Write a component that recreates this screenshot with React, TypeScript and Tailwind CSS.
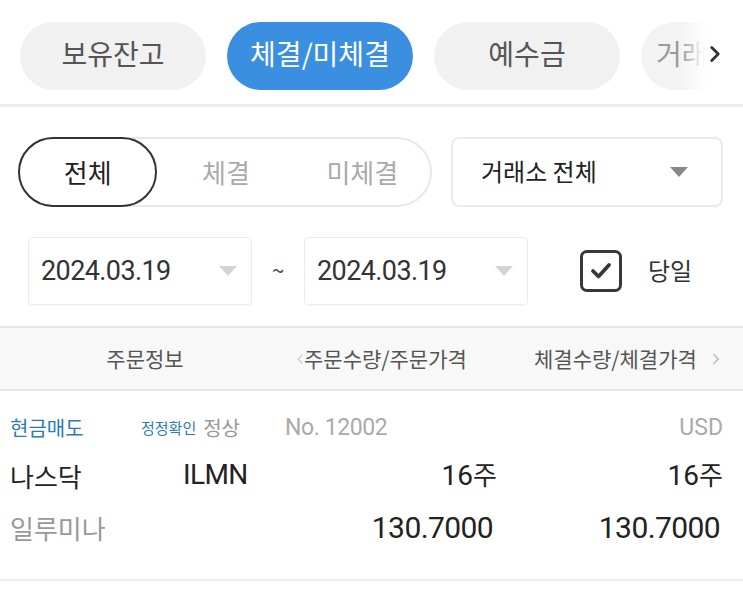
import { ChevronRight, ChevronLeft } from "lucide-react";

const tabs = ["보유잔고", "체결/미체결", "예수금"];

function Caret({ className }: { className: string }) {
  return (
    <svg width="18" height="10" viewBox="0 0 18 10" className={className}>
      <path d="M0 0 H18 L9 10 Z" fill="currentColor" />
    </svg>
  );
}

function DateBox({ value }: { value: string }) {
  return (
    <div className="flex h-[68px] w-[224px] items-center justify-between rounded-[4px] border border-[#ececec] pl-[12px] pr-[14px] shadow-[0_1px_2px_rgba(0,0,0,0.04)]">
      <span className="font-['Roboto'] text-[27px] tracking-[-0.6px] text-[#333]">{value}</span>
      <Caret className="text-[#d4d4d4]" />
    </div>
  );
}

export default function App() {
  return (
    <div className="w-[743px] h-[598px] overflow-hidden bg-white font-['Noto_Sans_CJK_KR','Noto_Sans',sans-serif]">
      {/* top tab strip */}
      <div className="relative h-[104px] overflow-hidden">
        <div className="flex gap-[21px] pl-[20px] pt-[22px]">
          {tabs.map((t, i) => (
            <div
              key={t}
              className={
                i === 1
                  ? "flex h-[68px] w-[186px] shrink-0 items-center justify-center rounded-full bg-[#3a8fe0] pb-[6px] text-[28px] text-white"
                  : "flex h-[68px] w-[186px] shrink-0 items-center justify-center rounded-full bg-[#f1f1f1] pb-[6px] text-[28px] text-[#555]"
              }
            >
              {t}
            </div>
          ))}
          <div className="flex h-[68px] w-[186px] shrink-0 items-center rounded-full bg-[#f3f3f3] pb-[6px] pl-[15px] text-[28px] text-[#999]">
            거래
          </div>
        </div>
        <div className="absolute right-0 top-[20px] flex h-[72px] w-[62px] items-center justify-end bg-gradient-to-r from-white/0 via-white/95 via-35% to-white pb-[4px] pr-[15px]">
          <ChevronRight size={26} strokeWidth={2.6} className="text-[#333]" />
        </div>
      </div>
      <div className="h-[3px] bg-[#ececec]" />

      {/* filters */}
      <div className="px-[18px] pt-[30px]">
        <div className="flex items-center">
          <div className="flex h-[70px] w-[414px] items-center rounded-full border-2 border-[#e8e8e8]">
            <div className="-ml-[2px] flex h-[70px] w-[140px] items-center justify-center rounded-full border-2 border-[#333] pb-[2px] text-[26px] text-[#222]">
              전체
            </div>
            <div className="w-[138px] pb-[2px] text-center text-[26px] text-[#aaa]">체결</div>
            <div className="w-[136px] pb-[2px] text-center text-[26px] text-[#aaa]">미체결</div>
          </div>
          <div className="ml-[19px] flex h-[70px] w-[272px] items-center justify-between rounded-[8px] border-2 border-[#ebebeb] pl-[28px] pr-[33px]">
            <span className="pb-[2px] text-[24px] text-[#222]">거래소 전체</span>
            <Caret className="text-[#888]" />
          </div>
        </div>

        <div className="mt-[30px] flex items-center pl-[10px]">
          <DateBox value="2024.03.19" />
          <span className="w-[52px] pb-[4px] text-center text-[22px] text-[#444]">~</span>
          <DateBox value="2024.03.19" />
          <div className="ml-[52px] flex h-[42px] w-[42px] items-center justify-center rounded-[7px] border-[3px] border-[#383838]">
            <svg width="24" height="20" viewBox="0 0 24 20">
              <path d="M4 10 L9.5 15.5 L20 4" fill="none" stroke="#383838" strokeWidth="3.8" strokeLinecap="round" strokeLinejoin="round" />
            </svg>
          </div>
          <span className="ml-[26px] pb-[2px] text-[24px] text-[#333]">당일</span>
        </div>
      </div>

      {/* table header */}
      <div className="mt-[21px] flex h-[65px] items-center border-y-2 border-[#e6e6e6] bg-[#f8f8f8] text-[21px] text-[#555]">
        <div className="w-[290px] text-center">주문정보</div>
        <div className="relative flex w-[236px] items-center justify-start pl-[14px]">
          <ChevronLeft size={16} className="absolute left-[2px] text-[#ccc]" />
          주문수량/주문가격
        </div>
        <div className="flex items-center pl-[8px]">
          체결수량/체결가격
          <ChevronRight size={18} className="ml-[10px] text-[#bbb]" />
        </div>
      </div>

      {/* order row */}
      <div className="h-[190px] border-b-2 border-[#eeeeee] px-[10px] pr-[20px] pt-[15px]">
        <div className="flex h-[44px] items-center">
          <span className="w-[131px] text-[20px] text-[#2b7cb6]">현금매도</span>
          <span className="text-[15px] text-[#2b7cb6]">정정확인</span>
          <span className="ml-[7px] text-[20px] text-[#999]">정상</span>
          <span className="ml-[45px] font-['Roboto'] text-[23px] tracking-[-0.4px] text-[#aaa]">No. 12002</span>
          <span className="ml-auto font-['Roboto'] text-[23px] text-[#aaa]">USD</span>
        </div>
        <div className="flex h-[50px] items-center text-[26px] text-[#222]">
          <span className="w-[173px]">나스닥</span>
          <span className="font-['Roboto'] text-[28px] tracking-[-0.6px]">ILMN</span>
          <span className="ml-auto w-[240px] text-right">
            <span className="font-['Roboto'] text-[28px]">16</span>주
          </span>
          <span className="w-[226px] text-right">
            <span className="font-['Roboto'] text-[28px]">16</span>주
          </span>
        </div>
        <div className="flex h-[54px] items-center">
          <span className="text-[26px] text-[#999]">일루미나</span>
          <span className="ml-auto w-[240px] pr-[4px] text-right font-['Roboto'] text-[30px] tracking-[-0.6px] text-[#222]">130.7000</span>
          <span className="w-[226px] pr-[3px] text-right font-['Roboto'] text-[30px] tracking-[-0.6px] text-[#222]">130.7000</span>
        </div>
      </div>
    </div>
  );
}
